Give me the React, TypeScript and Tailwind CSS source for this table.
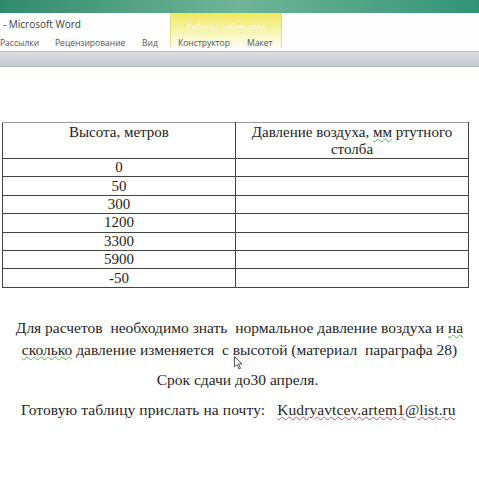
import React from 'react';

const heights = ['0', '50', '300', '1200', '3300', '5900', '-50'];

const serif = { fontFamily: '"Liberation Serif", "Times New Roman", serif' };

const App: React.FC = () => {
  return (
    <div className="relative w-[479px] h-[480px] overflow-hidden bg-white text-[#2a2a2a]">
      {/* Window title strip */}
      <div className="h-[13px] bg-gradient-to-r from-[#2f8a6c] via-[#6fb59a] to-[#2f9475]" />

      {/* Ribbon */}
      <div className="relative h-[38px] bg-[#fdfdfd] font-['Open_Sans',sans-serif]">
        <div className="absolute left-[170px] top-0 w-[112px] h-[34px] bg-gradient-to-b from-[#efe85a] via-[#f6f3a8] to-[#fdfdf4] border-x border-[#e6df7a]">
          <div className="text-center text-[8px] text-[#fbfbe6] pt-[7px]">Работа с таблицами</div>
        </div>
        <div className="relative pl-[3px] pt-[4px] text-[10px] text-[#3d3d3d]">- Microsoft Word</div>
        <div className="relative flex items-center text-[8.5px] text-[#555] mt-[5px]">
          <span className="w-[55px]">Рассылки</span>
          <span className="w-[87px]">Рецензирование</span>
          <span className="w-[36px]">Вид</span>
          <span className="w-[69px]">Конструктор</span>
          <span>Макет</span>
        </div>
      </div>

      {/* Gray band below ribbon */}
      <div className="h-[16px] border-t border-[#b9bcc1] bg-gradient-to-b from-[#dcdee1] to-[#c4c7cc] border-b border-[#b5b8bd]" />

      {/* Document page */}
      <div style={serif} className="pt-[55px]">
        <table className="ml-[2px] w-[467px] border-collapse text-[15px] leading-[17px] text-[#222]">
          <tbody>
            <tr>
              <td className="border border-[#444] border-t-[#9a9a9a] w-[233px] h-[35px] align-top text-center pt-[1px]">
                Высота, метров
              </td>
              <td className="border border-[#444] border-t-[#9a9a9a] align-top text-center px-[8px] pt-[1px]">
                Давление воздуха, <span className="underline decoration-wavy decoration-[#5bb55b] decoration-1">мм</span> ртутного столба
              </td>
            </tr>
            {heights.map((h) => (
              <tr key={h}>
                <td className="border border-[#444] h-[18.4px] text-center leading-[17px]">{h}</td>
                <td className="border border-[#444]" />
              </tr>
            ))}
          </tbody>
        </table>

        <div className="mt-[29px] text-[15.5px] leading-[22px] text-[#1f1f1f]">
          <p className="text-center px-[8px]">
            Для расчетов&nbsp; необходимо знать&nbsp; нормальное давление воздуха и{' '}
            <span className="underline decoration-wavy decoration-[#5bb55b] decoration-1">на сколько</span> давление изменяется&nbsp; с высотой (материал&nbsp; параграфа 28)
          </p>
          <p className="text-center mt-[8px] pr-[4px]">Срок сдачи до30 апреля.</p>
          <p className="mt-[8px] pl-[21px] tracking-[0.1px]">
            Готовую таблицу прислать на почту:&nbsp;&nbsp;{' '}
            <span className="underline decoration-wavy decoration-[#e05050] decoration-1">Kudryavtcev.artem1@list.ru</span>
          </p>
        </div>
      </div>

      {/* Mouse cursor */}
      <svg className="absolute left-[234px] top-[356px]" width="9" height="14" viewBox="0 0 9 14">
        <path d="M0.5 0.5 L0.5 11 L3 8.5 L5 13 L6.5 12.3 L4.6 8 L8 8 Z" fill="#fff" stroke="#444" strokeWidth="0.9" />
      </svg>
    </div>
  );
};

export default App;
